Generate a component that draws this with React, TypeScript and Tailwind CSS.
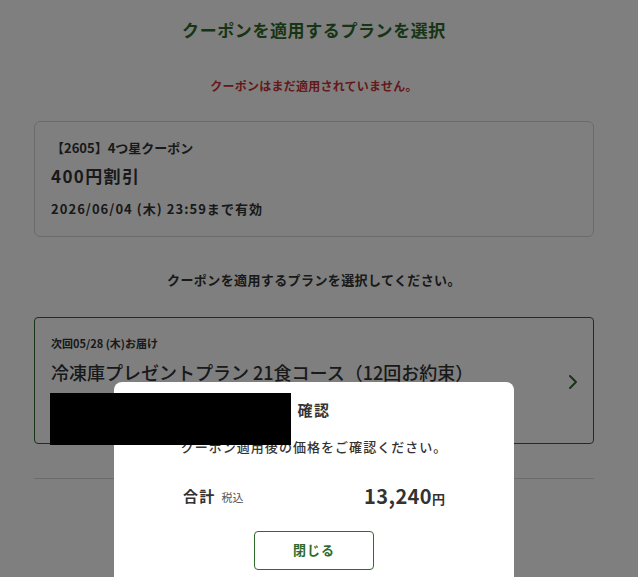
import { ChevronRight } from "lucide-react";

const font = { fontFamily: '"Noto Sans CJK JP", "Noto Sans", sans-serif' };

function CouponCard() {
  return (
    <div className="mt-[25px] h-[116px] rounded-md border border-[#d6d6d6] px-4 pt-[16px]">
      <p className="text-[13px] font-bold leading-[20px] text-[#333]">【2605】4つ星クーポン</p>
      <p className="mt-[6px] text-[17px] font-bold leading-[24px] tracking-[0.08em] text-[#333]">400円割引</p>
      <p className="mt-[11px] text-[13px] font-bold leading-[20px] tracking-[0.08em] text-[#333]">2026/06/04 (木) 23:59まで有効</p>
    </div>
  );
}

function PlanCard() {
  return (
    <div className="mt-[27px] flex h-[127px] items-start rounded-[4px] border border-[#2f6b2a] pl-4 pr-[8px] pt-[16px]">
      <div className="flex-1">
        <p className="text-[11px] font-bold leading-[18px] text-[#333]">次回05/28 (木)お届け</p>
        <p className="mt-[7px] text-[18px] font-medium leading-[26px] text-[#333]">冷凍庫プレゼントプラン 21食コース（12回お約束）</p>
      </div>
      <ChevronRight className="mt-[36px] h-6 w-6 text-[#2f6b2a]" strokeWidth={2} />
    </div>
  );
}

function ConfirmModal() {
  return (
    <div className="absolute left-[114px] top-[382px] h-[220px] w-[400px] rounded-lg bg-white px-[69px] pt-[17px]">
      <p className="text-center text-[15px] font-bold leading-[22px] tracking-[0.1em] text-[#333]">確認</p>
      <p className="-mx-4 mt-[16px] whitespace-nowrap text-center text-[13px] font-medium leading-[20px] tracking-[0.08em] text-[#333]">クーポン適用後の価格をご確認ください。</p>
      <div className="mt-[27px] flex items-center justify-between">
        <div className="flex items-baseline gap-[6px]">
          <span className="text-[15px] font-bold tracking-[0.08em] text-[#333]">合計</span>
          <span className="text-[11px] text-[#555]">税込</span>
        </div>
        <div className="flex items-baseline">
          <span className="text-[20px] font-bold leading-[24px] tracking-[0.02em] text-[#333]">13,240</span>
          <span className="text-[13px] font-bold text-[#333]">円</span>
        </div>
      </div>
      <div className="mt-[22px] flex justify-center">
        <button
          type="button"
          className="h-[39px] w-[120px] rounded-[4px] border border-[#2f6b2a] text-[13px] font-bold tracking-[0.08em] text-[#2f6b2a]"
        >
          閉じる
        </button>
      </div>
    </div>
  );
}

export default function App() {
  return (
    <div className="relative h-[577px] w-full overflow-hidden bg-white" style={font}>
      <div className="pl-[34px] pr-[44px] pt-[18px]">
        <h1 className="text-center text-[17px] font-bold leading-[24px] tracking-[0.035em] text-[#2f6b2a]">クーポンを適用するプランを選択</h1>
        <p className="mt-[34px] text-center text-[12px] font-bold leading-[20px] tracking-[0.02em] text-[#cc3333]">クーポンはまだ適用されていません。</p>
        <CouponCard />
        <p className="mt-[33px] text-center text-[13px] font-bold leading-[20px] tracking-[0.03em] text-[#333]">クーポンを適用するプランを選択してください。</p>
        <PlanCard />
        <div className="mt-[34px] h-px bg-[#d6d6d6]" />
      </div>

      <div className="absolute inset-0 bg-black/50" />
      <ConfirmModal />
      {/* redacted block from the capture */}
      <div className="absolute left-[50px] top-[393px] h-[52px] w-[241px] bg-black" />
    </div>
  );
}
